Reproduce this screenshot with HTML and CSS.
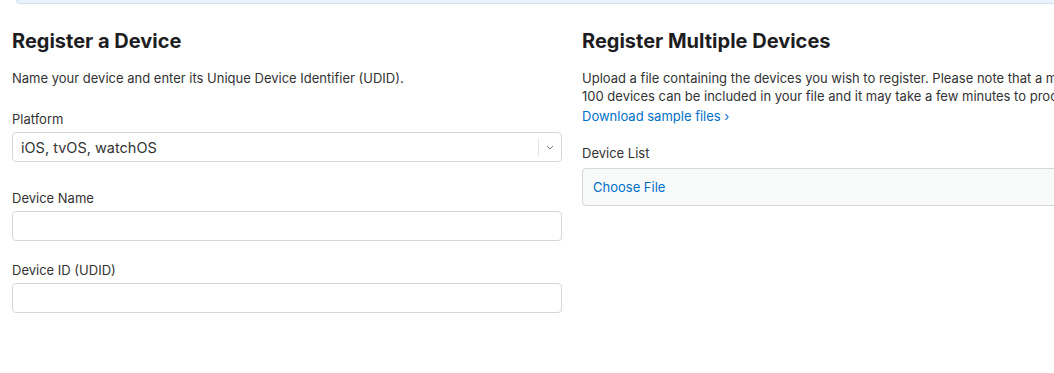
FILE: index.html
```html
<!DOCTYPE html>
<html lang="en">
<head>
  <meta charset="UTF-8">
  <title>Register a New Device</title>
  <link rel="stylesheet" href="styles.css">
</head>
<body>
  <div class="notice"></div>

  <div class="columns">
    <section class="panel">
      <h2>Register a Device</h2>
      <p class="intro">Name your device and enter its Unique Device Identifier (UDID).</p>

      <div class="form-group select-group">
        <label for="platform">Platform</label>
        <div class="select">
          <span class="select-value">iOS, tvOS, watchOS</span>
          <span class="select-arrow">
            <svg width="8" height="5" viewBox="0 0 8 5"><path d="M1 1l3 3 3-3" fill="none" stroke="#777" stroke-width="1"/></svg>
          </span>
        </div>
      </div>

      <div class="form-group">
        <label for="device-name">Device Name</label>
        <input type="text" id="device-name">
      </div>

      <div class="form-group">
        <label for="device-id">Device ID (UDID)</label>
        <input type="text" id="device-id">
      </div>
    </section>

    <section class="panel">
      <h2>Register Multiple Devices</h2>
      <p class="intro multi">Upload a file containing the devices you wish to register. Please note that a maximum of 100 devices can be included in your file and it may take a few minutes to process.</p>
      <a class="more" href="#">Download sample files ›</a>

      <div class="form-group">
        <label class="file-label">Device List</label>
        <div class="file-box">Choose File</div>
      </div>
    </section>
  </div>
</body>
</html>
```

FILE: styles.css
```css
body {
  font-family: Inter, "Liberation Sans", Arial, sans-serif;
  margin: 0;
  padding: 0 0 0 12px;
  background-color: #fff;
  color: #333;
  overflow: hidden;
}
.notice {
  height: 3px;
  margin-left: 4px;
  margin-right: -20px;
  background-color: #eaf3fc;
  border: 1px solid #cfe2f5;
  border-top: none;
  border-bottom-left-radius: 6px;
}
.columns {
  display: flex;
  gap: 20px;
  width: 1120px;
  padding-top: 24px;
}
.panel {
  width: 550px;
  flex: none;
}
h2 {
  font-size: 20px;
  font-weight: 700;
  color: #1d1d1f;
  margin: 0 0 15px;
  line-height: 26px;
}
.intro {
  font-size: 13px;
  line-height: 18px;
  margin: 0 0 23px;
  color: #333;
}
.intro.multi {
  margin-bottom: 2px;
}
.more {
  display: block;
  font-size: 13px;
  line-height: 18px;
  color: #0070c9;
  text-decoration: none;
  margin-bottom: 19px;
}
.form-group {
  margin-bottom: 20px;
}
.select-group {
  margin-bottom: 27px;
}
label {
  display: block;
  font-size: 13px;
  line-height: 18px;
  color: #333;
  margin-bottom: 4px;
}
.file-label {
  margin-bottom: 6px;
}
.select {
  display: flex;
  align-items: center;
  height: 30px;
  box-sizing: border-box;
  border: 1px solid #d6d6d6;
  border-radius: 4px;
  background-color: #fff;
}
.select-value {
  flex: 1;
  padding-left: 8px;
  font-size: 14.5px;
  color: #333;
}
.select-arrow {
  display: flex;
  align-items: center;
  justify-content: center;
  width: 22px;
  height: 18px;
  border-left: 1px solid #e3e3e3;
}
input {
  display: block;
  width: 100%;
  height: 30px;
  box-sizing: border-box;
  border: 1px solid #d6d6d6;
  border-radius: 4px;
  background-color: #fff;
  outline: none;
  margin: 0;
}
.file-box {
  height: 38px;
  box-sizing: border-box;
  border: 1px solid #d6d6d6;
  border-radius: 4px;
  background-color: #f8f9f9;
  color: #0070c9;
  font-size: 13px;
  line-height: 36px;
  padding-left: 10px;
}
```
